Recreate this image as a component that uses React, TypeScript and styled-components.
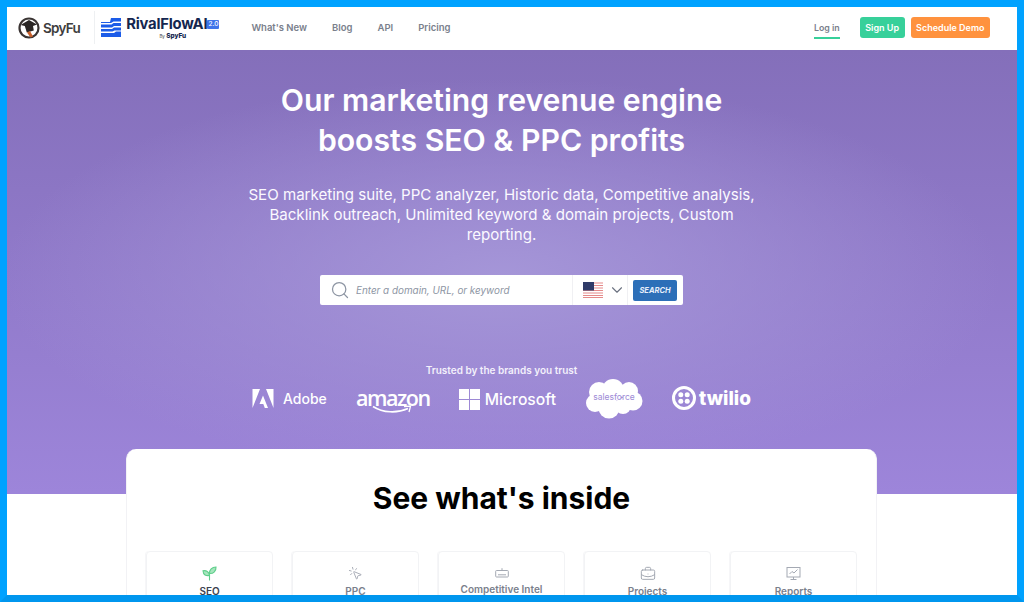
import { ReactNode } from "react";
import styled, { createGlobalStyle } from "styled-components";
import { BriefcaseBusiness, ChevronDown, MousePointerClick, Search } from "lucide-react";

const GlobalStyle = createGlobalStyle`
  html, body {
    margin: 0;
    padding: 0;
    background: #fff;
    font-family: Inter, "Liberation Sans", sans-serif;
  }
  * { box-sizing: border-box; }
`;

const navLinks = ["What's New", "Blog", "API", "Pricing"];

const logos = ["adobe", "amazon", "microsoft", "salesforce", "twilio"];

type Feature = { label: string; icon: ReactNode; active?: boolean; raised?: boolean };

const features: Feature[] = [
  { label: "SEO", icon: <SproutIcon />, active: true },
  { label: "PPC", icon: <MousePointerClick size={15} strokeWidth={1.5} /> },
  { label: "Competitive Intel", icon: <KeyboardIcon />, raised: true },
  { label: "Projects", icon: <BriefcaseBusiness size={16} strokeWidth={1.5} /> },
  { label: "Reports", icon: <ReportIcon /> },
];

function SproutIcon() {
  return (
    <svg width="15" height="15" viewBox="0 0 15 15" fill="#a6e5bd" stroke="#5fcf8b" strokeWidth="1.100">
      <path d="M7.500 14.500V7" fill="none" />
      <path d="M7.500 9.500C4 10 1.200 9 1 4.800 4 4.200 7.300 5.500 7.500 9.500Z" />
      <path d="M7.500 7.500C7.200 3.800 10 1 14 1c.3 3.800-2.500 6.800-6.500 6.500Z" />
    </svg>
  );
}

function KeyboardIcon() {
  return (
    <svg width="14" height="14" viewBox="0 0 14 14" fill="none" stroke="currentColor" strokeWidth="1">
      <rect x="0.700" y="4.500" width="12.600" height="6.500" rx="0.800" />
      <path d="M7 4.500V2.200M3 8.800h8" />
    </svg>
  );
}

function ReportIcon() {
  return (
    <svg width="15" height="15" viewBox="0 0 15 15" fill="none" stroke="currentColor" strokeWidth="1">
      <rect x="1" y="1.500" width="13" height="9.500" />
      <path d="M3.500 8 6 5.500 8 7l3.500-3.500" />
      <path d="M7.500 11v2M4.500 13.500h6" />
    </svg>
  );
}

function SpyFuMark() {
  return (
    <svg width="22" height="22" viewBox="0 0 22 22">
      <circle cx="11" cy="11" r="9.500" fill="#fff" stroke="#3a3433" strokeWidth="2.200" />
      <path d="M2.500 8 11 3l8 4.500-4 1.500.8 4.500-7 2-2-6.500Z" fill="#2b2625" />
      <path d="M9 15.500 12 14l3 5.500-2.500 1Z" fill="#c8602c" />
    </svg>
  );
}

function RivalFlowMark() {
  return (
    <svg width="20" height="19" viewBox="0 0 20 19" fill="#1c5ce8">
      <path d="M10 0h10v3.500h-7.500L10 5H0V4h9Z" />
      <path d="M0 6.500h10.500l2-1.500H20v3h-7L11 9.500H0Z" />
      <path d="M0 11h11l2-1.500h7v3h-6.500l-2 1H0Z" />
      <path d="M0 15h13l2-1.500h5V19H0Z" />
    </svg>
  );
}

function BrandLogo({ name }: { name: string }) {
  if (name === "adobe") {
    return (
      <AdobeLogo>
        <svg width="22" height="19" viewBox="0 0 21 19" fill="#fff">
          <path d="M0 0h7.500L0 19zM13.500 0H21v19zM10.500 6.500 15.500 19h-3.200l-1.500-4H7z" />
        </svg>
        <span>Adobe</span>
      </AdobeLogo>
    );
  }
  if (name === "amazon") {
    return (
      <AmazonLogo>
        <span>amazon</span>
        <svg width="42" height="9" viewBox="0 0 42 9" fill="none" stroke="#fff" strokeWidth="1.600">
          <path d="M1 1.500C11 8 25 8.500 36 3.500" />
          <path d="M32 1.500 38.500 1.200 37 7" strokeWidth="1.300" />
        </svg>
      </AmazonLogo>
    );
  }
  if (name === "microsoft") {
    return (
      <MicrosoftLogo>
        <svg width="21" height="21" viewBox="0 0 21 21" fill="#fff">
          <path d="M0 0h10v10H0zM11 0h10v10H11zM0 11h10v10H0zM11 11h10v10H11z" />
        </svg>
        <span>Microsoft</span>
      </MicrosoftLogo>
    );
  }
  if (name === "salesforce") {
    return (
      <SalesforceLogo>
        <svg width="58" height="40" viewBox="0 0 58 40" fill="#fff">
          <circle cx="14" cy="13" r="10" />
          <circle cx="28" cy="11" r="11" />
          <circle cx="44" cy="12" r="9" />
          <circle cx="48" cy="22" r="9.500" />
          <circle cx="10" cy="24" r="9" />
          <circle cx="24" cy="29" r="10.500" />
          <circle cx="38" cy="27" r="8" />
        </svg>
        <SalesforceText>salesforce</SalesforceText>
      </SalesforceLogo>
    );
  }
  return (
    <TwilioLogo>
      <svg width="24" height="24" viewBox="0 0 24 24" fill="#fff">
        <path
          fillRule="evenodd"
          d="M12 0a12 12 0 1 0 0 24 12 12 0 0 0 0-24Zm0 3a9 9 0 1 1 0 18 9 9 0 0 1 0-18Z"
        />
        <circle cx="8.800" cy="8.800" r="2.500" />
        <circle cx="15.200" cy="8.800" r="2.500" />
        <circle cx="8.800" cy="15.200" r="2.500" />
        <circle cx="15.200" cy="15.200" r="2.500" />
      </svg>
      <span>twilio</span>
    </TwilioLogo>
  );
}

function Flag() {
  return (
    <svg width="20" height="16" viewBox="0 0 20 16">
      <rect width="20" height="16" fill="#fff" />
      <path d="M0 1h20M0 3.500h20M0 6h20M0 8.500h20M0 11h20M0 13.500h20M0 15.500h20" stroke="#e58a8a" strokeWidth="1.200" />
      <rect width="11" height="8.500" fill="#2f3b68" />
    </svg>
  );
}

export default function App() {
  return (
    <>
      <GlobalStyle />
      <Frame>
        <Header>
          <LeftGroup>
            <SpyFuBrand>
              <SpyFuMark />
              <SpyFuName>SpyFu</SpyFuName>
            </SpyFuBrand>
            <RivalBrand>
              <RivalFlowMark />
              <RivalText>
                <RivalName>
                  RivalFlowAI<VersionTag>2.0</VersionTag>
                </RivalName>
                <RivalBy>
                  By <b>SpyFu</b>
                </RivalBy>
              </RivalText>
            </RivalBrand>
            <Nav>
              {navLinks.map((link) => (
                <NavLink key={link}>{link}</NavLink>
              ))}
            </Nav>
          </LeftGroup>
          <RightGroup>
            <LogIn>Log in</LogIn>
            <HeaderButton $color="#37d09a">Sign Up</HeaderButton>
            <HeaderButton $color="#ff923e">Schedule Demo</HeaderButton>
          </RightGroup>
        </Header>
        <Hero>
          <Title>
            Our marketing revenue engine
            <br />
            boosts SEO &amp; PPC profits
          </Title>
          <Subtitle>
            SEO marketing suite, PPC analyzer, Historic data, Competitive analysis, Backlink outreach, Unlimited keyword
            &amp; domain projects, Custom reporting.
          </Subtitle>
          <SearchBar>
            <SearchField>
              <Search size={20} strokeWidth={1.500} color="#8d95a3" />
              <Placeholder>Enter a domain, URL, or keyword</Placeholder>
            </SearchField>
            <CountryPicker>
              <Flag />
              <ChevronDown size={18} strokeWidth={1.500} color="#6b7280" />
            </CountryPicker>
            <SearchButtonCell>
              <SearchButton>SEARCH</SearchButton>
            </SearchButtonCell>
          </SearchBar>
          <Trusted>Trusted by the brands you trust</Trusted>
          <LogoRow>
            {logos.map((name) => (
              <BrandLogo key={name} name={name} />
            ))}
          </LogoRow>
        </Hero>
        <InsideCard>
          <InsideTitle>See what's inside</InsideTitle>
          <FeatureRow>
            {features.map((feature) => (
              <FeatureTile key={feature.label} $raised={feature.raised}>
                <FeatureIcon $active={feature.active}>{feature.icon}</FeatureIcon>
                <FeatureLabel $active={feature.active}>{feature.label}</FeatureLabel>
              </FeatureTile>
            ))}
          </FeatureRow>
        </InsideCard>
      </Frame>
    </>
  );
}

const Frame = styled.div`
  width: 1024px;
  height: 602px;
  overflow: hidden;
  border: 7px solid #00a2ff;
  border-bottom-color: #0096ee;
  background: #fff;
`;

const Header = styled.header`
  height: 43px;
  display: flex;
  align-items: center;
  justify-content: space-between;
  padding: 0 27px 2px 11px;
  background: #fff;
`;

const LeftGroup = styled.div`
  display: flex;
  align-items: center;
`;

const SpyFuBrand = styled.div`
  display: flex;
  align-items: center;
  gap: 3px;
  height: 33px;
  padding-right: 14px;
  border-right: 1px solid #eef0f2;
`;

const SpyFuName = styled.span`
  font-size: 13.500px;
  font-weight: 600;
  letter-spacing: -0.700px;
  color: #3d3d3d;
`;

const RivalBrand = styled.div`
  display: flex;
  align-items: center;
  gap: 5px;
  margin-left: 6px;
`;

const RivalText = styled.div`
  display: flex;
  flex-direction: column;
  align-items: center;
`;

const RivalName = styled.div`
  display: flex;
  align-items: center;
  font-size: 14.800px;
  line-height: 17px;
  font-weight: 700;
  letter-spacing: -0.200px;
  color: #14264f;
`;

const VersionTag = styled.span`
  padding: 0 1px;
  font-size: 6.500px;
  line-height: 9px;
  font-weight: 500;
  letter-spacing: 0;
  color: #fff;
  background: #3f73ea;
  border-radius: 1px;
`;

const RivalBy = styled.div`
  font-size: 4.500px;
  line-height: 7px;
  color: #444;

  b {
    font-size: 6.500px;
    font-weight: 800;
    color: #14264f;
  }
`;

const Nav = styled.nav`
  display: flex;
  gap: 25px;
  margin-left: 32px;
`;

const NavLink = styled.a`
  font-size: 9.500px;
  font-weight: 600;
  color: #7a808c;
`;

const RightGroup = styled.div`
  display: flex;
  align-items: center;
`;

const LogIn = styled.a`
  margin-right: 14px;
  padding: 5px 0 4px;
  font-size: 8.800px;
  font-weight: 600;
  color: #7a808c;
  border-bottom: 2px solid #37d09a;
`;

const HeaderButton = styled.button<{ $color: string }>`
  height: 21px;
  margin-left: 6px;
  padding: 0 5.500px;
  border: none;
  border-radius: 3px;
  font-family: inherit;
  font-size: 9px;
  font-weight: 600;
  color: #fff;
  background: ${(p) => p.$color};
`;

const Hero = styled.section`
  height: 444px;
  padding: 30px 21px 0 0;
  display: flex;
  flex-direction: column;
  align-items: center;
  background:
    radial-gradient(ellipse 500px 200px at 494px 228px, #a596d8 0%, rgba(165, 150, 216, 0) 100%),
    linear-gradient(180deg, #846fba 0%, #9d85da 100%);
`;

const Title = styled.h1`
  margin: 0;
  font-size: 30.200px;
  line-height: 40px;
  font-weight: 600;
  text-align: center;
  color: #fff;
`;

const Subtitle = styled.p`
  width: 520px;
  margin: 25px 0 0;
  font-size: 15.100px;
  line-height: 20px;
  text-align: center;
  color: #fbf9ff;
`;

const SearchBar = styled.div`
  width: 363px;
  height: 30px;
  margin-top: 30px;
  display: flex;
  align-items: stretch;
  border-radius: 2px;
  background: #fff;
`;

const SearchField = styled.div`
  flex: 1;
  display: flex;
  align-items: center;
  gap: 6px;
  padding-left: 10px;
`;

const Placeholder = styled.span`
  font-size: 9.900px;
  font-style: italic;
  color: #8d95a3;
`;

const CountryPicker = styled.div`
  width: 56px;
  display: flex;
  align-items: center;
  gap: 5px;
  padding-left: 10px;
  border-left: 1px solid #f0f0f3;
  border-right: 1px solid #f0f0f3;
`;

const SearchButtonCell = styled.div`
  width: 55px;
  display: flex;
  align-items: center;
  padding-left: 5px;
`;

const SearchButton = styled.button`
  width: 44px;
  height: 21px;
  padding: 0;
  border: none;
  border-radius: 2px;
  font-family: inherit;
  font-size: 7.500px;
  font-weight: 700;
  font-style: italic;
  color: #e6eefa;
  background: #2c6fb8;
`;

const Trusted = styled.div`
  margin-top: 59px;
  font-size: 10px;
  line-height: 13px;
  font-weight: 600;
  color: #f3f0fb;
`;

const LogoRow = styled.div`
  display: flex;
  align-items: center;
  gap: 29px;
  height: 40px;
  margin-top: 2px;
  color: #fff;
`;

const AdobeLogo = styled.div`
  display: flex;
  align-items: center;
  gap: 9px;
  padding-bottom: 2px;
  font-size: 14px;
  font-weight: 500;
`;

const AmazonLogo = styled.div`
  display: flex;
  flex-direction: column;
  align-items: center;
  width: 74px;
  padding-top: 3px;
  font-family: "Open Sans", sans-serif;
  font-size: 21.500px;
  line-height: 20px;
  font-weight: 600;
  letter-spacing: -1.500px;

  svg {
    margin-top: -3px;
  }
`;

const MicrosoftLogo = styled.div`
  display: flex;
  align-items: center;
  gap: 5px;
  font-size: 15.700px;
  font-weight: 500;
`;

const SalesforceLogo = styled.div`
  position: relative;
  width: 58px;
  height: 40px;
`;

const SalesforceText = styled.span`
  position: absolute;
  top: 13px;
  left: 0;
  width: 100%;
  text-align: center;
  font-size: 8.500px;
  color: #9d8bd6;
`;

const TwilioLogo = styled.div`
  display: flex;
  align-items: center;
  gap: 3px;
  padding-bottom: 2px;
  font-size: 19px;
  font-weight: 800;
`;

const InsideCard = styled.section`
  position: relative;
  width: 751px;
  height: 200px;
  margin: -45px 0 0 119px;
  padding-top: 30px;
  background: #fff;
  border: 1px solid #f2f2f5;
  border-top: none;
  border-radius: 10px 10px 0 0;
`;

const InsideTitle = styled.h2`
  margin: 0;
  font-size: 30px;
  line-height: 38px;
  font-weight: 700;
  text-align: center;
  color: #000;
`;

const FeatureRow = styled.div`
  display: grid;
  grid-template-columns: repeat(5, 127px);
  gap: 19px;
  margin: 34px 0 0 19px;
`;

const FeatureTile = styled.div<{ $raised?: boolean }>`
  height: 90px;
  display: flex;
  flex-direction: column;
  align-items: center;
  gap: ${(p) => (p.$raised ? "1px" : "3px")};
  padding-top: 14px;
  border: 1px solid #f2f3f5;
  border-radius: 4px;
  box-shadow: -1px 0 0 #f6f6f8;
`;

const FeatureIcon = styled.div<{ $active?: boolean }>`
  height: 15px;
  line-height: 0;
  color: ${(p) => (p.$active ? "#5fcf8b" : "#a4a9b3")};
`;

const FeatureLabel = styled.div<{ $active?: boolean }>`
  font-size: 10px;
  line-height: 14px;
  font-weight: 600;
  color: ${(p) => (p.$active ? "#3d4350" : "#7a808c")};
`;
